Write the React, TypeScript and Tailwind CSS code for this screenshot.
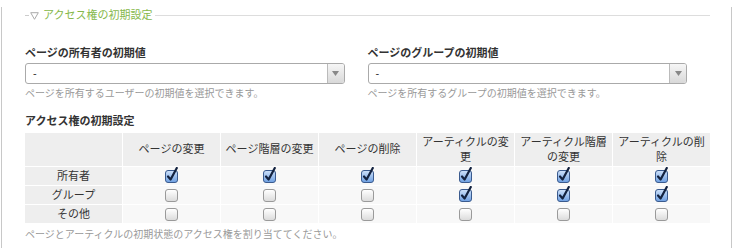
import React from "react";

const font = { fontFamily: '"Liberation Sans", "Noto Sans CJK JP", sans-serif' };

const headers = [
  "ページの変更",
  "ページ階層の変更",
  "ページの削除",
  "アーティクルの変更",
  "アーティクル階層の変更",
  "アーティクルの削除",
];

const rows: { label: string; values: boolean[] }[] = [
  { label: "所有者", values: [true, true, true, true, true, true] },
  { label: "グループ", values: [false, false, false, true, true, true] },
  { label: "その他", values: [false, false, false, false, false, false] },
];

function CheckBox({ checked }: { checked: boolean }) {
  if (!checked) {
    return (
      <span className="inline-block w-[13px] h-[13px] rounded-[3px] border border-[#9a9a9a] bg-gradient-to-b from-white to-[#dcdcdc]" />
    );
  }
  return (
    <svg width="15" height="16" viewBox="0 0 15 16" className="block">
      <defs>
        <linearGradient id="cbfill" x1="0" y1="0" x2="0" y2="1">
          <stop offset="0" stopColor="#cfe2fa" />
          <stop offset="1" stopColor="#6d9fe2" />
        </linearGradient>
      </defs>
      <rect x="1.5" y="3.5" width="12" height="12" rx="2.5" fill="url(#cbfill)" stroke="#3b5b8e" />
      <path d="M4 9.5 L6.6 12.5 L12.8 1" fill="none" stroke="#13223f" strokeWidth="2.2" strokeLinecap="round" strokeLinejoin="round" />
    </svg>
  );
}

function Select({ help }: { help: string }) {
  return (
    <div>
      <div className="flex h-[21px] rounded-[3px] border border-[#aaa] bg-white overflow-hidden">
        <div className="flex-1 pl-[7px] text-[11px] leading-[19px] text-[#333]">-</div>
        <div className="w-[17px] border-l border-[#bbb] bg-gradient-to-b from-[#f6f6f6] to-[#d9d9d9] flex items-center justify-center">
          <svg width="7" height="5" viewBox="0 0 7 5">
            <path d="M0 0 H7 L3.5 5 Z" fill="#888" />
          </svg>
        </div>
      </div>
      <p className="mt-[3px] text-[10px] leading-[14px] text-[#999]">{help}</p>
    </div>
  );
}

export default function App() {
  return (
    <div className="bg-white pl-px" style={font}>
      <div className="w-[731px] h-[248px] border-x border-[#c8c8c8] pl-[23px] pr-[21px]">
        <div className="flex items-center h-[16px] mt-[7px]">
          <div className="w-[4px] h-px bg-[#ccc]" />
          <svg width="9" height="8" viewBox="0 0 9 8" className="ml-[1px] mt-[2px]">
            <path d="M0.7 0.7 H8.3 L4.5 7.3 Z" fill="none" stroke="#aaa" strokeWidth="1" />
          </svg>
          <span className="ml-[4px] text-[11px] text-[#86b84a] whitespace-nowrap">アクセス権の初期設定</span>
          <div className="flex-1 h-px bg-[#ddd] ml-[3px]" />
        </div>

        <div className="grid grid-cols-2 gap-[23px] mt-[22px] pr-[23px]">
          <div>
            <h4 className="text-[11px] font-bold leading-[16px] text-[#333] mb-[2px]">ページの所有者の初期値</h4>
            <Select help="ページを所有するユーザーの初期値を選択できます。" />
          </div>
          <div>
            <h4 className="text-[11px] font-bold leading-[16px] text-[#333] mb-[2px]">ページのグループの初期値</h4>
            <Select help="ページを所有するグループの初期値を選択できます。" />
          </div>
        </div>

        <h4 className="mt-[12px] text-[11px] font-bold leading-[16px] text-[#333]">アクセス権の初期設定</h4>
        <div className="mt-[4px] grid grid-cols-7 gap-px text-[11px] text-[#333] text-center">
          <div className="bg-[#eeeeee] h-[33px]" />
          {headers.map((h) => (
            <div key={h} className="bg-[#eeeeee] h-[33px] flex items-center justify-center px-[4px] leading-[15px]">
              {h}
            </div>
          ))}
          {rows.map((r) => (
            <React.Fragment key={r.label}>
              <div className="bg-[#eeeeee] h-[18px] leading-[18px]">{r.label}</div>
              {r.values.map((v, i) => (
                <div key={i} className="bg-[#f8f8f8] h-[18px] flex items-end justify-center pb-[2px]">
                  <CheckBox checked={v} />
                </div>
              ))}
            </React.Fragment>
          ))}
        </div>
        <p className="mt-[5px] text-[10px] leading-[14px] text-[#999]">
          ページとアーティクルの初期状態のアクセス権を割り当ててください。
        </p>
      </div>
    </div>
  );
}
